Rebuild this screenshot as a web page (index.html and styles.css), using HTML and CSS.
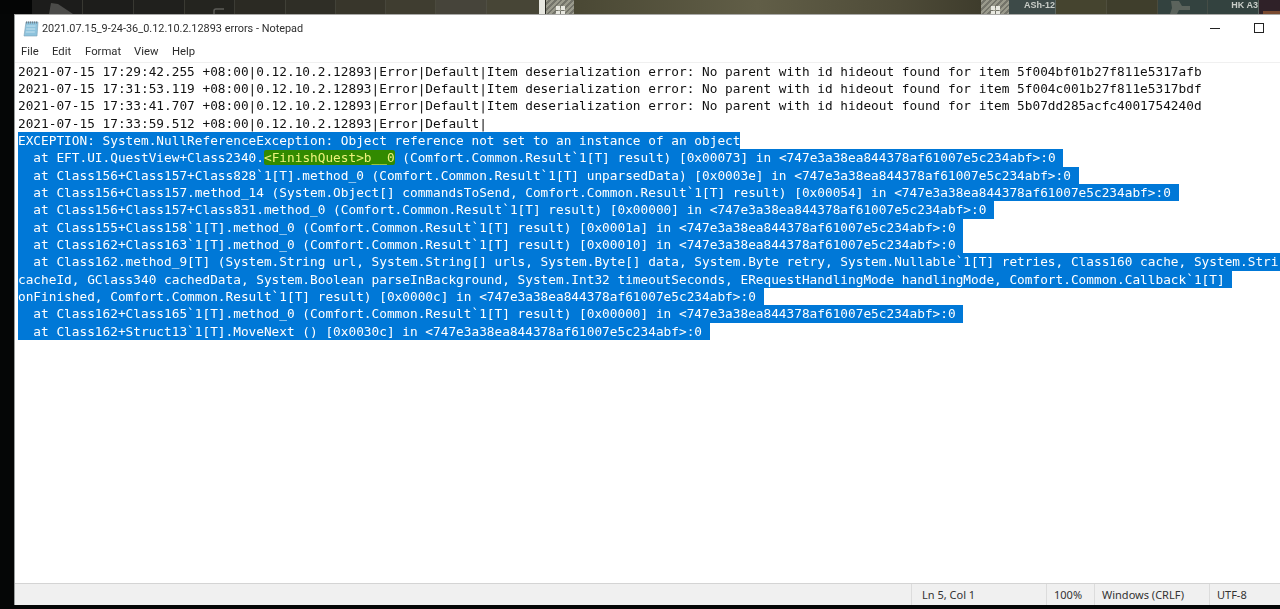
FILE: index.html
```html
<!DOCTYPE html>
<html lang="en">
<head>
<meta charset="utf-8">
<title>2021.07.15_9-24-36_0.12.10.2.12893 errors - Notepad</title>
<link rel="stylesheet" href="styles.css">
</head>
<body>
<div class="strip">
  <div class="seg s-black"></div>
  <div class="seg s-dark1"><svg class="shape" width="50" height="14" viewBox="0 0 50 14"><path d="M19 3l7 1 15 10H17z" fill="#4b4b49"/></svg></div>
  <div class="seg s-dark2"></div>
  <div class="seg s-dark3"></div>
  <div class="seg s-dark4"><svg class="shape" width="50" height="14" viewBox="0 0 50 14"><path d="M29 14v-3q0-2 2-2h8" fill="none" stroke="#5c5c58" stroke-width="1.5"/></svg></div>
  <div class="seg s-dark5"></div>
  <div class="seg s-dark6"></div>
  <div class="seg s-dark7"></div>
  <div class="seg s-dark8"></div>
  <div class="seg s-dark9"></div>
  <div class="seg s-dark10"></div>
  <div class="seg s-white"></div>
  <div class="seg s-tile s-tile-a"><span class="grid-ico"><i></i><i></i><i></i><i></i></span></div>
  <div class="seg s-olive"></div>
  <div class="seg s-tile s-tile-b"><span class="grid-ico"><i></i><i></i><i></i><i></i></span></div>
  <div class="seg s-teal-a"><span class="gun">ASh-12</span></div>
  <div class="seg s-olive2"></div>
  <div class="seg s-olive3"></div>
  <div class="seg s-teal-b"><svg class="shape" width="50" height="14" viewBox="0 0 50 14"><path d="M13 1h8l3 5h8v4H21l-2 4h-7l2-6z" fill="#5b635c"/></svg></div>
  <div class="seg s-teal-c"><span class="gun">HK A3</span></div>
  <div class="seg s-purple"><span class="glint"></span></div>
</div>
<div class="window">
  <div class="titlebar">
    <svg class="np-icon" width="16" height="17" viewBox="0 0 16 17">
      <path d="M3 2h12l-1 14H1z" fill="#8ec3dd" stroke="#7a9fb5" stroke-width=".6"/>
      <path d="M3.5 6h9M3.2 9h9M2.8 12h9" stroke="#c5e2ef" stroke-width="1"/>
      <path d="M3.5 1.5v2M5.5 1.5v2M7.5 1.5v2M9.5 1.5v2M11.5 1.5v2M13.5 1.5v2" stroke="#6f7f8a" stroke-width="1"/>
    </svg>
    <span class="title">2021.07.15_9-24-36_0.12.10.2.12893 errors - Notepad</span>
    <span class="win-btn"><span class="min-ico"></span></span>
    <span class="win-btn win-btn-last"><span class="max-ico"></span></span>
  </div>
  <div class="menubar">
    <span class="m-file">File</span>
    <span class="m-edit">Edit</span>
    <span class="m-format">Format</span>
    <span class="m-view">View</span>
    <span class="m-help">Help</span>
  </div>
  <div class="editor">
<div class="ln">2021-07-15 17:29:42.255 +08:00|0.12.10.2.12893|Error|Default|Item deserialization error: No parent with id hideout found for item 5f004bf01b27f811e5317afb</div>
<div class="ln">2021-07-15 17:31:53.119 +08:00|0.12.10.2.12893|Error|Default|Item deserialization error: No parent with id hideout found for item 5f004c001b27f811e5317bdf</div>
<div class="ln">2021-07-15 17:33:41.707 +08:00|0.12.10.2.12893|Error|Default|Item deserialization error: No parent with id hideout found for item 5b07dd285acfc4001754240d</div>
<div class="ln">2021-07-15 17:33:59.512 +08:00|0.12.10.2.12893|Error|Default|</div>
<div class="ln sel">EXCEPTION: System.NullReferenceException: Object reference not set to an instance of an object</div>
<div class="ln sel">  at EFT.UI.QuestView+Class2340.<span class="match">&lt;FinishQuest&gt;b__0</span> (Comfort.Common.Result`1[T] result) [0x00073] in &lt;747e3a38ea844378af61007e5c234abf&gt;:0 </div>
<div class="ln sel">  at Class156+Class157+Class828`1[T].method_0 (Comfort.Common.Result`1[T] unparsedData) [0x0003e] in &lt;747e3a38ea844378af61007e5c234abf&gt;:0 </div>
<div class="ln sel">  at Class156+Class157.method_14 (System.Object[] commandsToSend, Comfort.Common.Result`1[T] result) [0x00054] in &lt;747e3a38ea844378af61007e5c234abf&gt;:0 </div>
<div class="ln sel">  at Class156+Class157+Class831.method_0 (Comfort.Common.Result`1[T] result) [0x00000] in &lt;747e3a38ea844378af61007e5c234abf&gt;:0 </div>
<div class="ln sel">  at Class155+Class158`1[T].method_0 (Comfort.Common.Result`1[T] result) [0x0001a] in &lt;747e3a38ea844378af61007e5c234abf&gt;:0 </div>
<div class="ln sel">  at Class162+Class163`1[T].method_0 (Comfort.Common.Result`1[T] result) [0x00010] in &lt;747e3a38ea844378af61007e5c234abf&gt;:0 </div>
<div class="ln sel sel-full">  at Class162.method_9[T] (System.String url, System.String[] urls, System.Byte[] data, System.Byte retry, System.Nullable`1[T] retries, Class160 cache, System.Stri</div>
<div class="ln sel">cacheId, GClass340 cachedData, System.Boolean parseInBackground, System.Int32 timeoutSeconds, ERequestHandlingMode handlingMode, Comfort.Common.Callback`1[T] </div>
<div class="ln sel">onFinished, Comfort.Common.Result`1[T] result) [0x0000c] in &lt;747e3a38ea844378af61007e5c234abf&gt;:0 </div>
<div class="ln sel">  at Class162+Class165`1[T].method_0 (Comfort.Common.Result`1[T] result) [0x00000] in &lt;747e3a38ea844378af61007e5c234abf&gt;:0 </div>
<div class="ln sel">  at Class162+Struct13`1[T].MoveNext () [0x0030c] in &lt;747e3a38ea844378af61007e5c234abf&gt;:0 </div>
  </div>
  <div class="statusbar">
    <span class="st st-pos">Ln 5, Col 1</span>
    <span class="st st-zoom">100%</span>
    <span class="st st-eol">Windows (CRLF)</span>
    <span class="st st-enc">UTF-8</span>
  </div>
</div>
</body>
</html>
```
FILE: styles.css
```css
html, body { margin: 0; padding: 0; }
body {
  width: 1280px;
  height: 609px;
  overflow: hidden;
  background: #050606;
  font-family: "Noto Sans", "Open Sans", sans-serif;
}

/* game backdrop peeking above the window */
.strip { display: flex; height: 14px; overflow: hidden; filter: blur(.4px); }
.seg { height: 14px; flex: none; box-sizing: border-box; border-right: 1px solid rgba(90, 90, 80, .45); position: relative; }
.shape { display: block; }
.s-black { width: 32px; background: #040505; border-right: 0; }
.s-dark1 { width: 51px; background: #1c1c1b; }
.s-dark2 { width: 51px; background: #1d1d1b; }
.s-dark3 { width: 51px; background: #20201d; }
.s-dark4 { width: 50px; background: #24241f; }
.s-dark5 { width: 51px; background: #2b2a23; }
.s-dark6 { width: 50px; background: #2f2e26; }
.s-dark7 { width: 50px; background: #38362b; }
.s-dark8 { width: 50px; background: #3f3d30; }
.s-dark9 { width: 51px; background: #46443a; }
.s-dark10 { width: 52px; background: #474536; border-right: 0; }
.s-white { width: 7px; background: #e6e6df; border-right: 1px solid #26261f; }
.s-tile {
  background: repeating-linear-gradient(135deg, #9a9a8c 0 2px, #74746a 2px 4px);
  border-right: 0;
  display: flex;
  justify-content: center;
  align-items: flex-end;
}
.s-tile-a { width: 28px; }
.s-tile-b { width: 28px; }
.grid-ico { display: grid; grid-template-columns: 4px 4px; gap: 1px; margin-bottom: -1px; }
.grid-ico i { width: 4px; height: 4px; background: #e8e8e0; }
.s-olive { width: 407px; background: linear-gradient(90deg, #4a4834, #615e47 45%, #4e4b38 80%, #3e3c2c); border-right: 0; }
.s-teal-a { width: 47px; background: #3d4a48; border-right: 1px solid #5c6660; }
.s-olive2 { width: 51px; background: #45442f; }
.s-olive3 { width: 51px; background: #3f3e2c; }
.s-teal-b { width: 50px; background: #33423f; }
.s-teal-c { width: 51px; background: #33423f; border-right: 1px solid #5c6660; }
.s-purple { width: 22px; background: #2f2128; border-right: 0; }
.glint { display: block; height: 3px; margin: 11px 0 0 4px; background: #7a4a30; }
.gun {
  display: block;
  font-family: "Liberation Sans", sans-serif;
  font-size: 9px;
  font-weight: 700;
  line-height: 10px;
  color: #c9cdc8;
  text-align: right;
  white-space: nowrap;
}

.window {
  margin-left: 14px;
  height: 591px;
  box-sizing: border-box;
  border-top: 1px solid #a9a9a7;
  border-left: 1px solid #9a9d9c;
  background: #fff;
  display: flex;
  flex-direction: column;
  filter: blur(.3px);
}

.titlebar { height: 27px; display: flex; align-items: center; flex: none; padding-left: 8px; color: #333; }
.np-icon { flex: none; margin-right: 3px; }
.title { font-family: Roboto, sans-serif; font-size: 10.9px; color: #2e2e2e; flex: 1; white-space: nowrap; }
.win-btn { display: flex; align-items: center; justify-content: center; flex: none; width: 44px; height: 26px; margin-bottom: 1px; }
.win-btn-last { margin-right: -1px; }
.min-ico { width: 10px; height: 1px; background: #222; }
.max-ico { width: 8px; height: 8px; border: 1px solid #222; }

.menubar { height: 20.8px; box-sizing: border-box; flex: none; display: flex; align-items: center; font-family: Roboto, sans-serif; font-size: 11.3px; color: #2c2c2c; padding: 0 0 1px 6px; border-bottom: 1px solid #f0f0f0; }
.m-file { width: 31px; }
.m-edit { width: 33px; }
.m-format { width: 49px; }
.m-view { width: 38px; }

.editor {
  flex: 1;
  min-height: 0;
  overflow: hidden;
  padding: 0 0 0 3px;
  font-family: "DejaVu Sans Mono", monospace;
  font-size: 12.77px;
  line-height: 17.33px;
  color: #111;
}
.ln { white-space: pre; width: fit-content; }
.sel { background: #0078d7; color: #fff; }
.sel-full { width: auto; }
.match { background: #328a00; color: #eef27a; border-radius: 2px; }

.statusbar { height: 22px; box-sizing: border-box; flex: none; display: flex; background: #f0f0f0; border-top: 1px solid #d4d4d4; font-size: 11px; color: #333; padding-left: 896px; }
.st { display: flex; align-items: center; box-sizing: border-box; border-left: 1px solid #dcdcdc; padding-left: 10px; white-space: nowrap; }
.st-pos { width: 135px; }
.st-zoom { width: 48px; padding-left: 7px; }
.st-eol { width: 115px; padding-left: 7px; }
.st-enc { width: 71px; padding-left: 7px; }
```
